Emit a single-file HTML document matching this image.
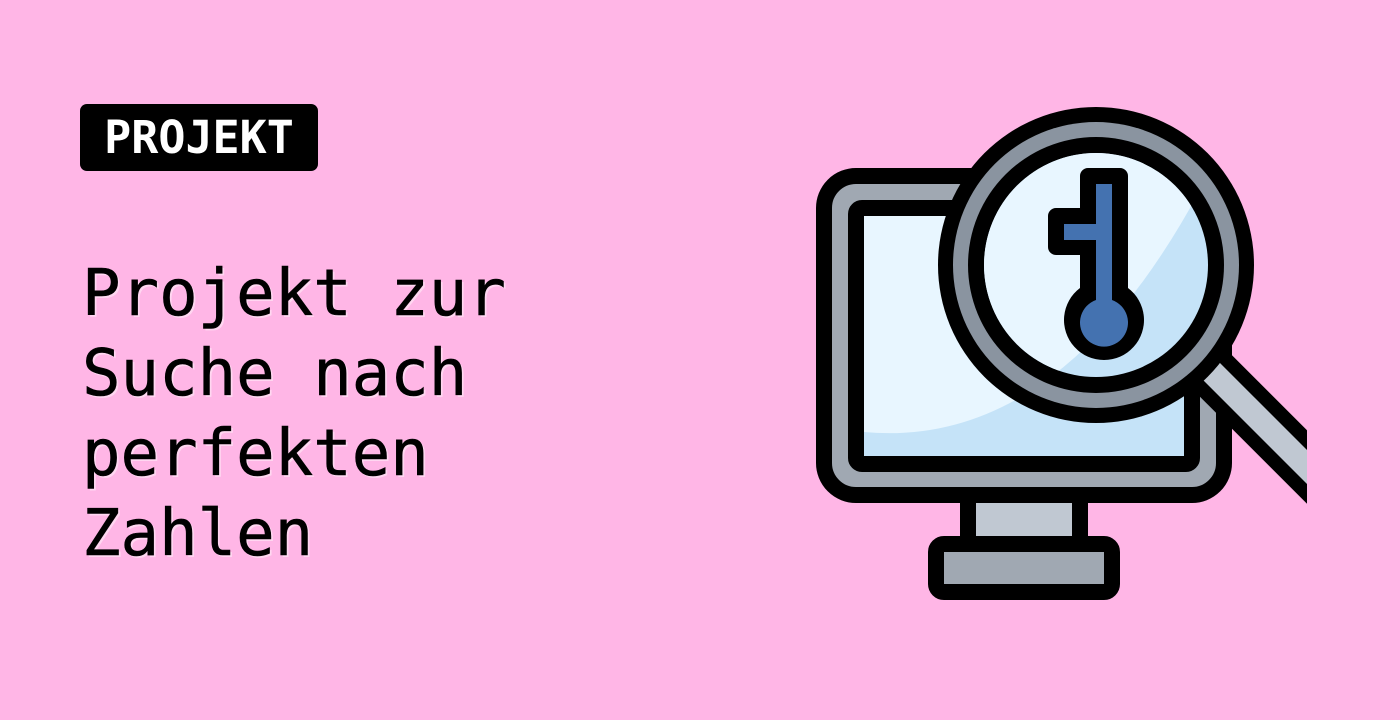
<!DOCTYPE html>
<html><head><meta charset="utf-8"><style>
html,body{margin:0;padding:0}
body{width:1400px;height:720px;background:#ffb6e6;position:relative;overflow:hidden;font-family:"DejaVu Sans Mono","Liberation Mono",monospace}
.badge{position:absolute;left:80px;top:104px;width:238px;height:67px;background:#000;border-radius:7px;color:#fff;font-size:45px;line-height:67px;text-align:center;font-weight:bold;letter-spacing:0px}
.title{position:absolute;left:82px;top:254px;font-size:64px;line-height:80px;color:#000;text-shadow:2px 2px 0 rgba(255,255,255,0.45);-webkit-text-stroke:0.6px #000}
svg{position:absolute;left:0;top:0}
</style></head><body>
<div class="badge">PROJEKT</div>
<div class="title">Projekt zur<br>Suche nach<br>perfekten<br>Zahlen</div>
<svg width="1400" height="720" viewBox="0 0 1400 720">
<defs>
<clipPath id="scr"><rect x="864" y="216" width="320" height="240"/></clipPath>
<clipPath id="lens"><circle cx="1096" cy="265" r="112"/></clipPath>
<clipPath id="hc"><rect x="0" y="0" width="1307" height="720"/></clipPath>
</defs>
<rect x="968" y="494" width="112" height="50" fill="#c0c8d2" stroke="#000" stroke-width="16"/>
<rect x="936" y="544" width="176" height="48" rx="8" fill="#a0a8b2" stroke="#000" stroke-width="16"/>
<rect x="824" y="176" width="400" height="319" rx="32" fill="#a0a8b2" stroke="#000" stroke-width="16"/>
<rect x="856" y="208" width="336" height="256" rx="6" fill="#c5e3f8" stroke="#000" stroke-width="16"/>
<path d="M864,216 L1200,216 L1200,190 Q1060,450 864,432 Z" fill="#e8f6ff" clip-path="url(#scr)"/>
<g clip-path="url(#hc)">
<line x1="1100" y1="260" x2="1400" y2="560" stroke="#000" stroke-width="52"/>
<line x1="1100" y1="260" x2="1400" y2="560" stroke="#c0c8d2" stroke-width="24"/>
</g>
<circle cx="1096" cy="265" r="158" fill="#000"/>
<circle cx="1096" cy="265" r="143" fill="#8a94a0"/>
<circle cx="1096" cy="265" r="128" fill="#000"/>
<circle cx="1096" cy="265" r="112" fill="#c5e3f8"/>
<path d="M960,140 L1220,140 L1200,190 Q1060,450 864,432 Z" fill="#e8f6ff" clip-path="url(#lens)"/>
<path d="M1088,168 H1120 a8,8 0 0 1 8,8 V288 A40,40 0 1 1 1080,288 V255 H1056 a8,8 0 0 1 -8,-8 V216 a8,8 0 0 1 8,-8 H1080 V176 a8,8 0 0 1 8,-8 Z" fill="#000"/>
<path d="M1096,184 H1112 V300 A24,24 0 1 1 1096,300 V240 H1064 V224 H1096 Z" fill="#4472b0"/>
</svg>
</body></html>
